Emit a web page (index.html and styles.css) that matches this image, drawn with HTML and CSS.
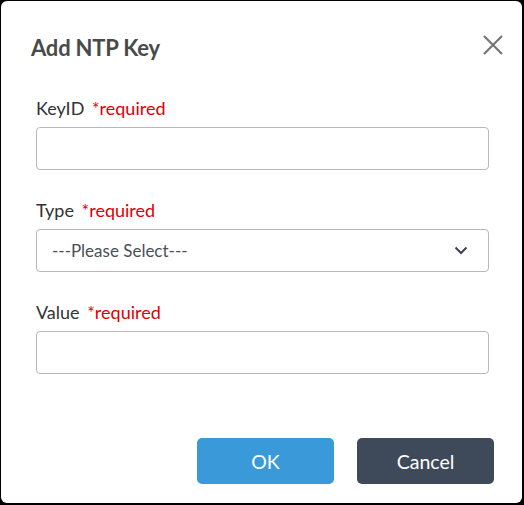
FILE: index.html
```html
<!DOCTYPE html>
<html>
<head>
<meta charset="utf-8">
<link rel="stylesheet" href="styles.css">
</head>
<body>
<div class="dialog">
  <div class="header">
    <h1 class="title">Add NTP Key</h1>
    <button class="close" aria-label="Close">
      <svg width="22" height="22" viewBox="0 0 22 22"><path d="M2 2L20 20M20 2L2 20" stroke="#757575" stroke-width="2.2" fill="none"/></svg>
    </button>
  </div>
  <div class="body">
    <div class="field">
      <label class="label">KeyID <span class="req">*required</span></label>
      <div class="input"></div>
    </div>
    <div class="field">
      <label class="label">Type <span class="req">*required</span></label>
      <div class="input select">
        <span class="placeholder">---Please Select---</span>
        <svg width="14" height="9" viewBox="0 0 14 9"><path d="M1.5 1.5L7 7L12.5 1.5" stroke="#3c4450" stroke-width="2" fill="none"/></svg>
      </div>
    </div>
    <div class="field">
      <label class="label">Value <span class="req">*required</span></label>
      <div class="input"></div>
    </div>
  </div>
  <div class="footer">
    <button class="btn ok">OK</button>
    <button class="btn cancel">Cancel</button>
  </div>
</div>
</body>
</html>
```
FILE: styles.css
```css
html, body {
  margin: 0;
  padding: 0;
  background: #000;
  width: 524px;
  height: 505px;
  overflow: hidden;
}
body {
  font-family: Lato, "Open Sans", sans-serif;
  padding: 1px 2px 2px 1px;
  box-sizing: border-box;
}
.dialog {
  background: #fff;
  border-radius: 6px;
  width: 521px;
  height: 502px;
  box-sizing: border-box;
  display: flex;
  flex-direction: column;
}
.header {
  display: flex;
  justify-content: space-between;
  align-items: center;
  padding: 31px 18px 0 30px;
  height: 30px;
}
.title {
  margin: 0;
  font-size: 22px;
  font-weight: 700;
  color: #4a4a4a;
  letter-spacing: -0.2px;
}
.close {
  border: none;
  background: none;
  padding: 0;
  width: 22px;
  height: 22px;
  display: flex;
  margin-top: -4px;
}
.body {
  padding: 35px 33px 0 35px;
  display: flex;
  flex-direction: column;
  gap: 29px;
}
.field {
  display: flex;
  flex-direction: column;
  gap: 8px;
}
.label {
  font-size: 18px;
  color: #333;
  line-height: 22px;
}
.req {
  color: #e00000;
  margin-left: 3px;
}
.input {
  height: 43px;
  border: 1px solid #b8b8b8;
  border-radius: 4px;
  box-sizing: border-box;
}
.select {
  display: flex;
  align-items: center;
  justify-content: space-between;
  padding: 0 20px 0 15px;
}
.placeholder {
  font-size: 17px;
  color: #4a4f57;
}
.footer {
  margin-top: auto;
  display: flex;
  justify-content: flex-end;
  gap: 23px;
  padding: 0 28px 19px 0;
}
.btn {
  width: 137px;
  height: 46px;
  border: none;
  border-radius: 5px;
  color: #fff;
  font-family: Lato, "Open Sans", sans-serif;
  font-size: 19.5px;
}
.ok { background: #3a9ad9; }
.cancel { background: #3e4959; }
```
